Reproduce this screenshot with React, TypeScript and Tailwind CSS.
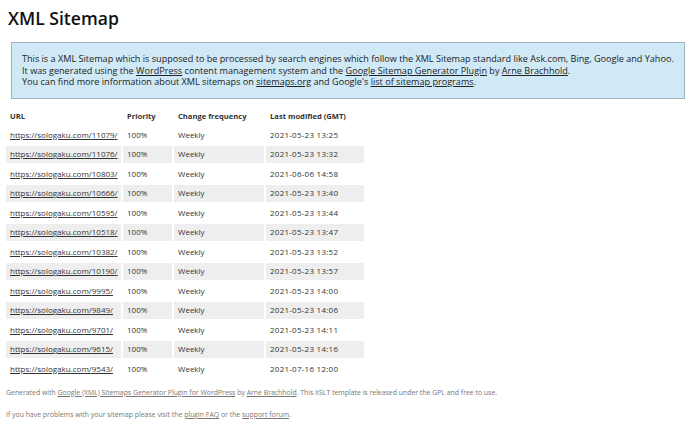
const rows: [string, string][] = [
  ["11079", "2021-05-23 13:25"],
  ["11076", "2021-05-23 13:32"],
  ["10803", "2021-06-06 14:58"],
  ["10666", "2021-05-23 13:40"],
  ["10595", "2021-05-23 13:44"],
  ["10518", "2021-05-23 13:47"],
  ["10382", "2021-05-23 13:52"],
  ["10190", "2021-05-23 13:57"],
  ["9995", "2021-05-23 14:00"],
  ["9849", "2021-05-23 14:06"],
  ["9701", "2021-05-23 14:11"],
  ["9615", "2021-05-23 14:16"],
  ["9543", "2021-07-16 12:00"],
];

export default function App() {
  return (
    <div
      className="w-[694px] h-[427px] bg-white text-[#222] overflow-hidden"
      style={{ fontFamily: '"Open Sans", "Noto Sans", sans-serif' }}
    >
      <h1 className="pl-[8px] pt-[6px] text-[17.6px] leading-[24px] font-semibold text-[#111]">XML Sitemap</h1>

      {/* intro box */}
      <div className="mx-[11px] mt-[12px] w-[674px] h-[57px] border border-[#9fb2bd] bg-[#d0e9f6] px-[10px] pt-[10px] text-[9.1px] leading-[11.5px] text-[#222]">
        <p>
          This is a XML Sitemap which is supposed to be processed by search engines which follow the XML Sitemap standard like Ask.com, Bing, Google and Yahoo.
        </p>
        <p>
          It was generated using the <a className="underline">WordPress</a> content management system and the{" "}
          <a className="underline">Google Sitemap Generator Plugin</a> by <a className="underline">Arne Brachhold</a>.
        </p>
        <p>
          You can find more information about XML sitemaps on <a className="underline">sitemaps.org</a> and Google's{" "}
          <a className="underline">list of sitemap programs</a>.
        </p>
      </div>

      {/* url table */}
      <table className="ml-[4px] mt-[5px] border-separate border-spacing-[2px] text-[8px] text-[#333]">
        <thead>
          <tr className="h-[18px]">
            <th className="w-[115px] pl-[4px] pt-[3px] text-left font-bold text-[7.6px]">URL</th>
            <th className="w-[49px] pl-[4px] pt-[3px] text-left font-bold text-[7.6px]">Priority</th>
            <th className="w-[90px] pl-[4px] pt-[3px] text-left font-bold text-[7.6px]">Change frequency</th>
            <th className="w-[98px] pl-[4px] pt-[3px] text-left font-bold text-[7.6px]">Last modified (GMT)</th>
          </tr>
        </thead>
        <tbody>
          {rows.map(([id, date], i) => (
            <tr key={id} className={`h-[17.5px] ${i % 2 === 1 ? "bg-[#eeeeee]" : ""}`}>
              <td className="pl-[4px]">
                <a className="underline text-[#333]">https://sologaku.com/{id}/</a>
              </td>
              <td className="pl-[4px]">100%</td>
              <td className="pl-[4px]">Weekly</td>
              <td className="pl-[4px] tracking-[0.25px]">{date}</td>
            </tr>
          ))}
        </tbody>
      </table>

      {/* footer */}
      <div className="pl-[6px] text-[6.9px] text-[#777]">
        <p className="mt-[8px]">
          Generated with <a className="underline">Google (XML) Sitemaps Generator Plugin for WordPress</a> by{" "}
          <a className="underline">Arne Brachhold</a>. This XSLT template is released under the GPL and free to use.
        </p>
        <p className="mt-[12px]">
          If you have problems with your sitemap please visit the <a className="underline">plugin FAQ</a> or the{" "}
          <a className="underline">support forum</a>.
        </p>
      </div>
    </div>
  );
}
